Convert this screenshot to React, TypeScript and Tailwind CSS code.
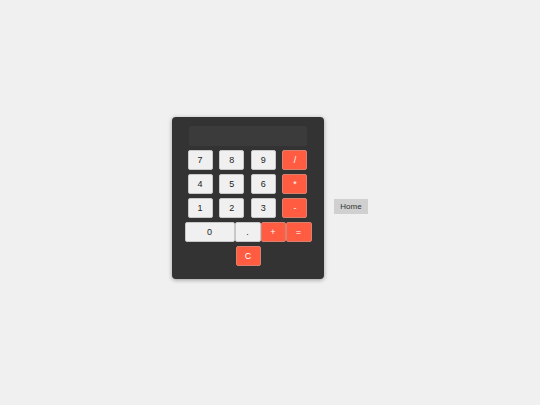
import React, { useState } from 'react';

const light = 'bg-[#f0f0f0] text-[#222] border-[#c8c8c8]';
const orange = 'bg-[#ff5c42] text-white border-[#d9806f]';

const Key: React.FC<{ label: string; tone?: 'light' | 'orange'; width?: string; onPress: (v: string) => void }> = ({
  label,
  tone = 'light',
  width = 'w-[25px]',
  onPress,
}) => (
  <button
    onClick={() => onPress(label)}
    className={`${width} h-[20px] flex items-center justify-center border rounded-[2px] text-[9px] leading-none ${
      tone === 'orange' ? orange : light
    }`}
  >
    {label}
  </button>
);

const App: React.FC = () => {
  const [display, setDisplay] = useState('');

  const press = (v: string) => {
    if (v === 'C') return setDisplay('');
    if (v === '=') {
      try {
        // eslint-disable-next-line no-new-func
        setDisplay(String(Function(`return (${display})`)()));
      } catch {
        setDisplay('Error');
      }
      return;
    }
    setDisplay(display + v);
  };

  const rows = [
    ['7', '8', '9', '/'],
    ['4', '5', '6', '*'],
    ['1', '2', '3', '-'],
  ];

  return (
    <div
      className="min-h-screen w-full bg-[#f0f0f0] flex justify-center items-start pt-[117px] gap-[10px]"
      style={{ fontFamily: '"Liberation Sans", Arial, sans-serif' }}
    >
      {/* Calculator */}
      <div className="w-[152px] h-[162px] bg-[#333333] rounded-[4px] shadow-[0_1px_4px_rgba(0,0,0,0.35)] flex flex-col items-center pt-[9px]">
        <div className="w-[118px] h-[20px] bg-[#3b3b3b] rounded-[2px] text-white text-[10px] flex items-center justify-end px-2">
          {display}
        </div>
        <div className="mt-[4px] flex flex-col gap-[4px]">
          {rows.map((row) => (
            <div key={row[0]} className="w-[120px] flex justify-between">
              {row.map((k) => (
                <Key key={k} label={k} tone={k === '/' || k === '*' || k === '-' ? 'orange' : 'light'} onPress={press} />
              ))}
            </div>
          ))}
          <div className="flex -mx-[3px]">
            <Key label="0" width="w-[50px]" onPress={press} />
            <Key label="." width="w-[26px]" onPress={press} />
            <Key label="+" tone="orange" onPress={press} />
            <Key label="=" tone="orange" width="w-[26px]" onPress={press} />
          </div>
          <div className="flex justify-center">
            <Key label="C" tone="orange" onPress={press} />
          </div>
        </div>
      </div>

      {/* Home */}
      <button className="mt-[82px] w-[34px] h-[15px] bg-[#d0d0d0] text-[#333] font-normal text-[8px] leading-none flex items-center justify-center">
        Home
      </button>
    </div>
  );
};

export default App;
